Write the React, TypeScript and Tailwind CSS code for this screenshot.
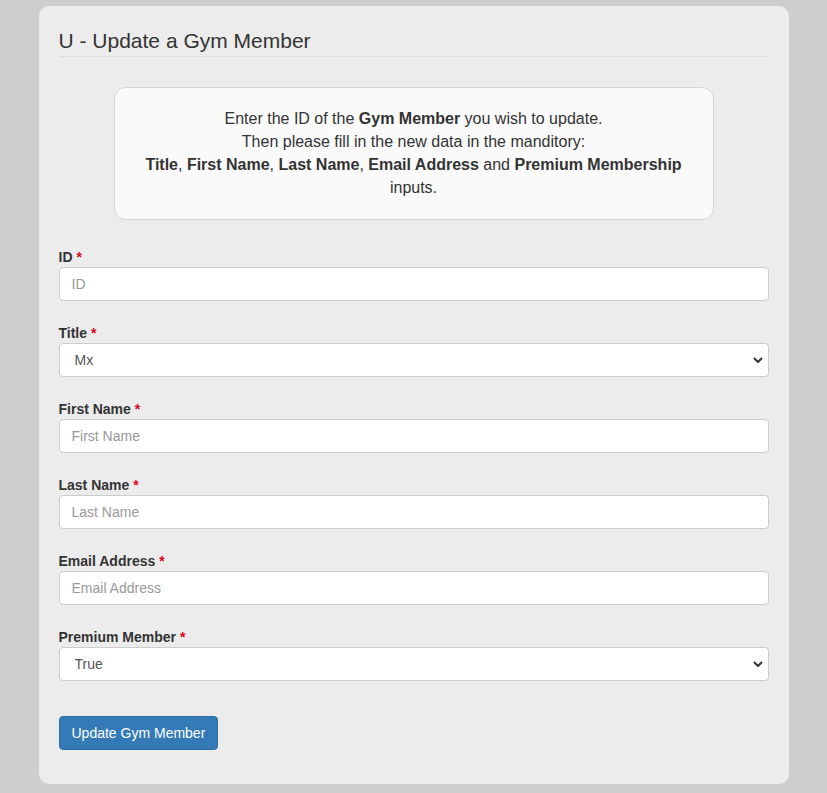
const font = { fontFamily: '"Liberation Sans", Arial, Helvetica, sans-serif' }

function Chevron() {
    return (
        <svg width="10" height="6" viewBox="0 0 10 6" className="pointer-events-none absolute right-[6px] top-1/2 -translate-y-1/2">
            <path d="M1 1 L5 5 L9 1" fill="none" stroke="#333" strokeWidth="2" />
        </svg>
    )
}

function Field({ label, children }: { label: string; children: React.ReactNode }) {
    return (
        <div className="mb-[22px] flex flex-col">
            <label className="text-[14px] font-bold leading-[20px] text-[#333]">
                {label} <span className="text-[#e2001a]">*</span>
            </label>
            {children}
        </div>
    )
}

function TextInput({ placeholder }: { placeholder: string }) {
    return (
        <input
            type="text"
            placeholder={placeholder}
            className="h-[34px] w-full rounded-[4px] border border-[#ccc] bg-white px-[12px] text-[14px] text-[#555] outline-none placeholder:text-[#999]"
            style={font}
        />
    )
}

function Select({ value, options }: { value: string; options: string[] }) {
    return (
        <div className="relative">
            <select
                defaultValue={value}
                className="h-[34px] w-full appearance-none rounded-[4px] border border-[#ccc] bg-white pl-[15px] text-[14px] text-[#555] outline-none"
                style={font}
            >
                {options.map((o) => (
                    <option key={o}>{o}</option>
                ))}
            </select>
            <Chevron />
        </div>
    )
}

export default function App() {
    return (
        <main className="min-h-screen bg-[#cecece] pt-[6px] pb-[9px]" style={font}>
            <div className="mx-auto w-[750px] rounded-[10px] bg-[#ececec] px-[20px] pt-[22px] pb-[34px]">
                <h3 className="border-b border-[#dcdcdc] pb-[2px] text-[21px] leading-[26px] text-[#333]">
                    U - Update a Gym Member
                </h3>

                <div className="mx-auto mt-[30px] w-[600px] rounded-[12px] border border-[#d6d6d6] bg-[#fafafa] pt-[19px] pb-[20px] text-center text-[16px] leading-[23px] text-[#333]">
                    Enter the ID of the <b>Gym Member</b> you wish to update.
                    <br />
                    Then please fill in the new data in the manditory:
                    <br />
                    <b>Title</b>, <b>First Name</b>, <b>Last Name</b>, <b>Email Address</b> and{" "}
                    <b>Premium Membership</b>
                    <br />
                    inputs.
                </div>

                <form className="mt-[27px]">
                    <Field label="ID">
                        <TextInput placeholder="ID" />
                    </Field>
                    <Field label="Title">
                        <Select value="Mx" options={["Mr", "Mrs", "Ms", "Miss", "Mx", "Dr"]} />
                    </Field>
                    <Field label="First Name">
                        <TextInput placeholder="First Name" />
                    </Field>
                    <Field label="Last Name">
                        <TextInput placeholder="Last Name" />
                    </Field>
                    <Field label="Email Address">
                        <TextInput placeholder="Email Address" />
                    </Field>
                    <Field label="Premium Member">
                        <Select value="True" options={["True", "False"]} />
                    </Field>

                    <button
                        type="button"
                        className="mt-[13px] h-[34px] rounded-[4px] border border-[#2e6da4] bg-[#337ab7] px-[12px] text-[14px] text-white"
                    >
                        Update Gym Member
                    </button>
                </form>
            </div>
        </main>
    )
}
